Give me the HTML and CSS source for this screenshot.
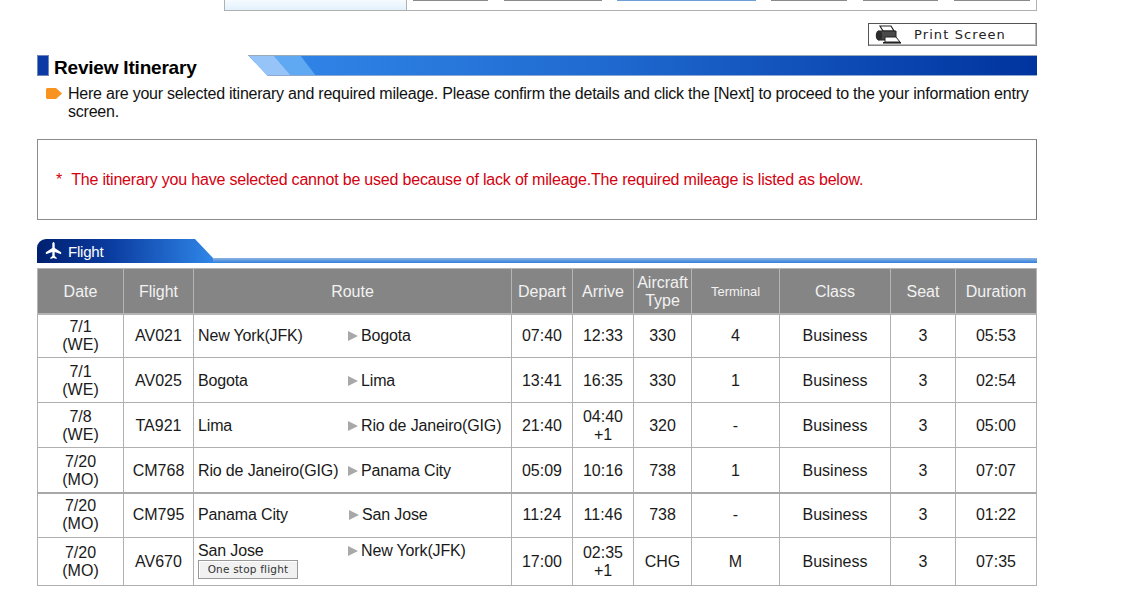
FILE: index.html
```html
<!DOCTYPE html>
<html lang="en">
<head>
<meta charset="utf-8">
<title>Review Itinerary</title>
<link rel="stylesheet" href="styles.css">
</head>
<body>
<main class="page">
  <nav class="topnav">
    <div class="tab-first"></div>
    <div class="tab t1"></div>
    <div class="tab t2"></div>
    <div class="tab t3 active"></div>
    <div class="tab t4"></div>
    <div class="tab t4"></div>
    <div class="tab t4"></div>
  </nav>
  <div class="print-row">
    <button class="print-btn" type="button">
      <svg class="print-icon" width="28" height="21" viewBox="0 0 28 21">
        <path d="M5 2h11l3 5H8z" fill="#fff" stroke="#222" stroke-width="1.200"/>
        <path d="M3 7h18v9H3z" fill="#4a4a4a" stroke="#222"/>
        <ellipse cx="4" cy="11.500" rx="3.200" ry="4.800" fill="#2c2c2c"/>
        <path d="M10 13h11l4 5H10z" fill="#fff" stroke="#222"/>
        <path d="M8 18h18v1.600H8z" fill="#222"/>
      </svg>
      <span>Print Screen</span>
    </button>
  </div>
  <header class="heading">
    <span class="heading-mark"></span>
    <h1>Review Itinerary</h1>
    <svg class="heading-bar" viewBox="0 0 789 21" preserveAspectRatio="none">
      <defs>
        <linearGradient id="barfill" x1="0" x2="1" y1="0" y2="0">
          <stop offset="0" stop-color="#3388ea"/>
          <stop offset="0.45" stop-color="#1f6ad0"/>
          <stop offset="1" stop-color="#00339e"/>
        </linearGradient>
      </defs>
      <polygon points="0,0 789,0 789,21 20,21" fill="url(#barfill)"/>
      <polygon points="0,0 52,0 68,21 20,21" fill="#5fa8f2"/>
      <polygon points="0,0 25,0 43,21 20,21" fill="#96c4f9"/>
      <rect x="0" y="0" width="789" height="1" fill="#9aa9bb"/>
      <rect x="20" y="20" width="769" height="1" fill="#8ea9cf"/>
    </svg>
  </header>
  <div class="intro">
    <svg class="intro-arrow" width="16" height="11" viewBox="0 0 16 11"><path d="M1 0h9l6 5.500-6 5.500H1l-1-1V1z" fill="#f7931e"/></svg>
    <p>Here are your selected itinerary and required mileage. Please confirm the details and click the [Next] to proceed to the your information entry screen.</p>
  </div>
  <div class="notice"><span class="star">*</span>&nbsp; The itinerary you have selected cannot be used because of lack of mileage.The required mileage is listed as below.</div>
  <div class="section">
    <div class="section-tab">
      <svg width="17" height="18" viewBox="0 0 20 18" preserveAspectRatio="none"><path d="M10 0c.9 0 1.400 1 1.400 2.200V6l7.600 4.300v1.900l-7.600-2.300v4l2.300 1.800V17L10 16l-3.700 1v-1.300l2.300-1.800v-4L1 12.200v-1.900L8.600 6V2.200C8.600 1 9.100 0 10 0z" fill="#fff"/></svg>
      <span>Flight</span>
    </div>
    <div class="section-line"></div>
  </div>
  <table class="flights">
    <colgroup>
      <col class="c-date"><col class="c-flight"><col class="c-route"><col class="c-time"><col class="c-time"><col class="c-type"><col class="c-term"><col class="c-class"><col class="c-seat"><col class="c-dur">
    </colgroup>
    <thead>
      <tr><th>Date</th><th>Flight</th><th>Route</th><th>Depart</th><th>Arrive</th><th>Aircraft Type</th><th class="small">Terminal</th><th>Class</th><th>Seat</th><th>Duration</th></tr>
    </thead>
    <tbody>
      <tr class="first"><td>7/1<br>(WE)</td><td>AV021</td><td class="route"><div class="leg"><span class="from">New York(JFK)</span><span class="to">Bogota</span></div></td><td>07:40</td><td>12:33</td><td>330</td><td>4</td><td>Business</td><td>3</td><td>05:53</td></tr>
      <tr class="low"><td>7/1<br>(WE)</td><td>AV025</td><td class="route"><div class="leg"><span class="from">Bogota</span><span class="to">Lima</span></div></td><td>13:41</td><td>16:35</td><td>330</td><td>1</td><td>Business</td><td>3</td><td>02:54</td></tr>
      <tr class="low"><td>7/8<br>(WE)</td><td>TA921</td><td class="route"><div class="leg"><span class="from">Lima</span><span class="to">Rio de Janeiro(GIG)</span></div></td><td>21:40</td><td>04:40<br>+1</td><td>320</td><td>-</td><td>Business</td><td>3</td><td>05:00</td></tr>
      <tr class="low thick"><td>7/20<br>(MO)</td><td>CM768</td><td class="route"><div class="leg"><span class="from">Rio de Janeiro(GIG)</span><span class="to">Panama City</span></div></td><td>05:09</td><td>10:16</td><td>738</td><td>1</td><td>Business</td><td>3</td><td>07:07</td></tr>
      <tr><td>7/20<br>(MO)</td><td>CM795</td><td class="route"><div class="leg"><span class="from">Panama City</span><span class="to shifted">San Jose</span></div></td><td>11:24</td><td>11:46</td><td>738</td><td>-</td><td>Business</td><td>3</td><td>01:22</td></tr>
      <tr class="last"><td>7/20<br>(MO)</td><td>AV670</td><td class="route"><div class="leg top"><div class="from">San Jose<span class="stop">One stop flight</span></div><span class="to">New York(JFK)</span></div></td><td>17:00</td><td>02:35<br>+1</td><td>CHG</td><td>M</td><td>Business</td><td>3</td><td>07:35</td></tr>
    </tbody>
  </table>
</main>
</body>
</html>
```

FILE: styles.css
```css
* { box-sizing: border-box; }
html, body { margin: 0; background: #fff; overflow: hidden; }
body { font-family: "Liberation Sans", Arial, sans-serif; color: #000; }
.page { width: 1037px; height: 596px; padding-left: 37px; overflow: hidden; }

.topnav { display: flex; height: 11px; margin-left: 187px; border: 1px solid #b0b0b0; border-top: 0; }
.tab-first { flex: none; width: 182px; background: linear-gradient(#f6fbff, #e2f1fd); border-right: 1px solid #b0b0b0; }
.tab { flex: none; height: 1px; border-bottom: 1px solid #8a8a8a; margin-right: 15px; }
.t1 { width: 75px; margin-left: 6px; margin-right: 16px; }
.t2 { width: 98px; }
.t3 { width: 139px; }
.t4 { width: 75.5px; margin-right: 16px; }
.active { border-bottom-color: #6d9fd4; }

.print-row { display: flex; justify-content: flex-end; margin-top: 12px; }
.print-btn { display: flex; align-items: center; width: 169px; height: 23px; padding: 0 0 0 6px; background: #fff; border: 1px solid #555; border-right-color: #888; border-bottom-color: #888; box-shadow: inset -1px -1px 0 #bbb; font: 13px "DejaVu Sans", sans-serif; letter-spacing: 1.1px; color: #222; }
.print-icon { flex: none; margin-right: 11px; }

.heading { display: flex; align-items: stretch; height: 21px; margin-top: 9px; }
.heading-mark { width: 12px; background: #0b3aa5; border: 1px solid #6f86b8; }
.heading h1 { width: 199px; margin: 0; padding-left: 5px; font-size: 19px; line-height: 26px; font-weight: bold; letter-spacing: -0.2px; }
.heading-bar { flex: 1; height: 21px; min-width: 0; }

.intro { display: flex; margin-top: 9px; }
.intro-arrow { flex: none; margin: 3px 0 0 9px; }
.intro p { margin: 0 0 0 6px; width: 965px; font-size: 16px; line-height: 18px; letter-spacing: -0.23px; color: #111; }

.notice { height: 81px; margin-top: 18px; padding-left: 18px; border: 1px solid #8c8c8c; border-right-color: #777; line-height: 79px; font-size: 16px; letter-spacing: -0.2px; color: #d4000f; }
.star { margin-right: 1px; }

.section { display: flex; align-items: flex-end; height: 24px; margin-top: 19px; }
.section-tab { flex: none; display: flex; align-items: center; width: 176px; height: 24px; padding-left: 8px; gap: 6px; color: #fff; font-size: 15px; letter-spacing: -0.2px; background: linear-gradient(90deg, #00206f, #0a3a9e 40%, #2f86e8); border-radius: 9px 0 0 0; clip-path: polygon(0 0, 158px 0, 176px 19px, 176px 100%, 0 100%); }
.section-line { flex: 1; height: 5px; background: linear-gradient(#8fb4e0, #2f7fdf); }

.flights { width: 999px; table-layout: fixed; border-collapse: collapse; margin-top: 5px; font-size: 16px; line-height: 18px; text-align: center; }
.c-date { width: 86px; }
.c-flight { width: 70px; }
.c-route { width: 318px; }
.c-time { width: 61px; }
.c-type { width: 58px; }
.c-term { width: 88px; }
.c-class { width: 111px; }
.c-seat { width: 65px; }
.c-dur { width: 81px; }
.flights th { height: 45px; padding: 2px 0 0; border: 1px solid #b4b4b4; border-bottom-width: 2px; background: #858585; color: #f2f2f2; font-weight: normal; }
.flights th.small { font-size: 13px; }
.flights td { height: 45px; padding: 0; border: 1px solid #b0b0b0; color: #1a1a1a; }
.flights tr.first td { height: 44px; }
.flights tr.low td { padding-top: 2px; }
.flights tr.thick td { border-bottom: 2px solid #a8a8a8; }
.flights tr.last td { height: 48px; }
.flights td.route { text-align: left; padding-left: 4px; letter-spacing: -0.15px; }
.flights tr.last td.route { padding-bottom: 3px; }
.leg { display: flex; align-items: center; }
.leg.top { align-items: flex-start; }
.from { width: 150px; flex: none; }
.to { position: relative; padding-left: 13px; }
.to.shifted { margin-left: 1px; }
.to::before { content: ""; position: absolute; left: 0; top: 4px; border: 5px solid transparent; border-left: 10px solid #a8a8a8; border-right: 0; }
.stop { display: block; width: 100px; height: 19px; border: 1px solid #999; background: #f1f1f1; font: 10.5px/17px "DejaVu Sans", sans-serif; letter-spacing: 0.2px; text-align: center; color: #333; box-shadow: inset 1px 1px 0 #fff; }
```
